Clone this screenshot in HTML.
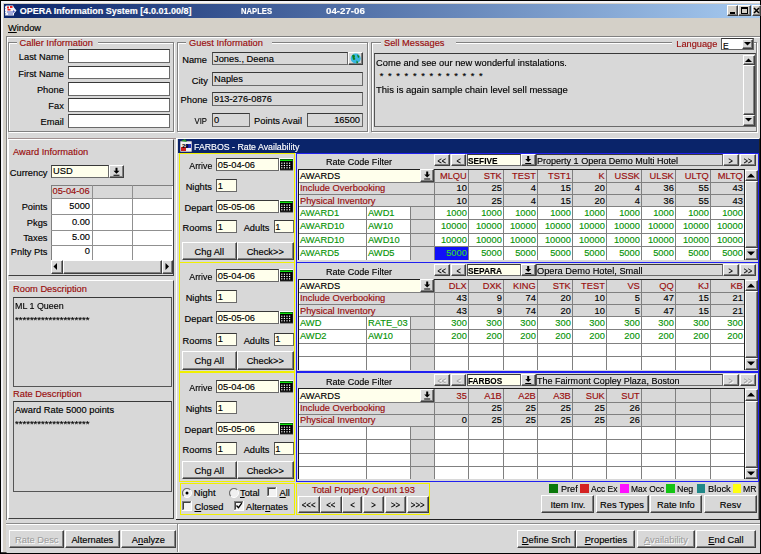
<!DOCTYPE html>
<html><head><meta charset="utf-8"><style>
html,body{margin:0;padding:0;}
body{width:761px;height:554px;overflow:hidden;position:relative;font-family:"Liberation Sans",sans-serif;}
body>div,body>svg{position:absolute;}
.t{white-space:pre;line-height:1.117;-webkit-text-stroke:0.15px currentColor;}
</style></head><body>
<div style="left:0px;top:0px;width:761px;height:554px;background:#D4D0C8;"></div>
<div style="left:0px;top:0px;width:761px;height:1px;background:#000;"></div>
<div style="left:0px;top:0px;width:1px;height:554px;background:#000;"></div>
<div style="left:1px;top:1px;width:759px;height:2px;background:#F4F4F8;"></div>
<div style="left:1px;top:1px;width:2px;height:552px;background:#F4F4F8;"></div>
<div style="left:760px;top:0px;width:1px;height:554px;background:#000;"></div>
<div style="left:0px;top:553px;width:761px;height:1px;background:#000;"></div>
<div style="left:1px;top:552px;width:759px;height:1px;background:#404040;"></div>
<div style="left:4px;top:4px;width:756px;height:14px;background:linear-gradient(90deg,#0A246A 0%,#A6CAF0 100%);"></div>
<svg style="left:5px;top:5px" width="12" height="11"><path d="M1 0.5h7l1 2l2.5 3l-2.5 3v2h-9l0.5 -2l-1 -1l1 -1l-1 -1.5l1 -1.5l-1 -1z" fill="#F4F4FA"/><path d="M2 1.5h2v2h-2zM5 1h2.5v2h-2.5zM2.5 4h3v1.5h-3z" fill="#F02020"/><path d="M2 6.5h6v1h-6zM3 8.5h5v1h-5zM8 5l2 1.5l-2 1.5z" fill="#5060C0"/></svg>
<div class="t" style="left:19.7px;top:6.16px;font-size:9px;color:#fff;font-weight:bold;transform:scaleX(1.000);transform-origin:left;">OPERA Information System [4.0.01.00/8]</div>
<div class="t" style="left:241px;top:6.16px;font-size:9px;color:#fff;font-weight:bold;transform:scaleX(0.849);transform-origin:left;">NAPLES</div>
<div class="t" style="left:326px;top:6.16px;font-size:9px;color:#fff;font-weight:bold;transform:scaleX(1.077);transform-origin:left;">04-27-06</div>
<div style="left:727px;top:5px;width:11px;height:11px;background:#D4D0C8;box-sizing:border-box;border:1px solid;border-color:#fff #404040 #404040 #fff;box-shadow:inset -1px -1px #808080;"></div>
<div style="left:730px;top:12px;width:5px;height:2px;background:#000;"></div>
<div style="left:738px;top:5px;width:13px;height:11px;background:#D4D0C8;box-sizing:border-box;border:1px solid;border-color:#fff #404040 #404040 #fff;box-shadow:inset -1px -1px #808080;"></div>
<div style="left:741px;top:7px;width:7px;height:7px;box-sizing:border-box;border:1px solid #000;border-top-width:2px;"></div>
<div style="left:752px;top:5px;width:9px;height:11px;background:#D4D0C8;box-sizing:border-box;border:1px solid;border-color:#fff #404040 #404040 #fff;box-shadow:inset -1px -1px #808080;"></div>
<svg style="left:753px;top:6px" width="8" height="9"><path d="M1 2l5 5M6 2l-5 5" stroke="#000" stroke-width="1.5"/></svg>
<div class="t" style="left:8px;top:23.28px;font-size:9.3px;color:#000;font-weight:normal;"><u>W</u>indow</div>
<div style="left:6px;top:36px;width:754px;height:517px;background:#D8D8D8;box-sizing:border-box;border-top:1px solid #808080;border-left:1px solid #808080;"></div>
<div style="left:7px;top:37px;width:753px;height:1px;background:#fff;"></div>
<div style="left:7px;top:37px;width:1px;height:515px;background:#fff;"></div>
<div style="left:8px;top:138px;width:168px;height:0.8px;background:#A09090;"></div>
<div style="left:8px;top:42px;width:166px;height:89.8px;box-sizing:border-box;border:1px solid #808080;"></div>
<div style="left:9px;top:43px;width:164px;height:87.8px;box-sizing:border-box;border:1px solid #fff;border-right:none;border-bottom:none;"></div>
<div style="left:9px;top:131.8px;width:166px;height:1px;background:#fff;"></div>
<div style="left:174px;top:43px;width:1px;height:89.8px;background:#fff;"></div>
<div style="left:16.5px;top:41px;width:81px;height:4px;background:#D8D8D8;"></div>
<div class="t" style="left:19.5px;top:38.28px;font-size:9.3px;color:#980C0C;font-weight:normal;">Caller Information</div>
<div style="left:177px;top:42px;width:191px;height:89.8px;box-sizing:border-box;border:1px solid #808080;"></div>
<div style="left:178px;top:43px;width:189px;height:87.8px;box-sizing:border-box;border:1px solid #fff;border-right:none;border-bottom:none;"></div>
<div style="left:178px;top:131.8px;width:191px;height:1px;background:#fff;"></div>
<div style="left:368px;top:43px;width:1px;height:89.8px;background:#fff;"></div>
<div style="left:186px;top:41px;width:86px;height:4px;background:#D8D8D8;"></div>
<div class="t" style="left:189px;top:38.28px;font-size:9.3px;color:#980C0C;font-weight:normal;">Guest Information</div>
<div style="left:371px;top:42px;width:386px;height:89.8px;box-sizing:border-box;border:1px solid #808080;"></div>
<div style="left:372px;top:43px;width:384px;height:87.8px;box-sizing:border-box;border:1px solid #fff;border-right:none;border-bottom:none;"></div>
<div style="left:372px;top:131.8px;width:386px;height:1px;background:#fff;"></div>
<div style="left:757px;top:43px;width:1px;height:89.8px;background:#fff;"></div>
<div style="left:381px;top:41px;width:75px;height:4px;background:#D8D8D8;"></div>
<div class="t" style="left:384px;top:38.28px;font-size:9.3px;color:#980C0C;font-weight:normal;">Sell Messages</div>
<div class="t" style="right:697.2px;top:52.18px;font-size:9.3px;color:#000;font-weight:normal;text-align:right;">Last Name</div>
<div style="left:68px;top:49px;width:102px;height:13.5px;background:#fff;box-sizing:border-box;border:1px solid #6a6a6a;border-top-color:#383838;border-left-color:#555;"></div>
<div class="t" style="right:697.2px;top:68.68px;font-size:9.3px;color:#000;font-weight:normal;text-align:right;">First Name</div>
<div style="left:68px;top:65.5px;width:102px;height:13.5px;background:#fff;box-sizing:border-box;border:1px solid #6a6a6a;border-top-color:#383838;border-left-color:#555;"></div>
<div class="t" style="right:697.2px;top:85.18px;font-size:9.3px;color:#000;font-weight:normal;text-align:right;">Phone</div>
<div style="left:68px;top:82px;width:102px;height:13.5px;background:#fff;box-sizing:border-box;border:1px solid #6a6a6a;border-top-color:#383838;border-left-color:#555;"></div>
<div class="t" style="right:697.2px;top:101.18px;font-size:9.3px;color:#000;font-weight:normal;text-align:right;">Fax</div>
<div style="left:68px;top:98px;width:102px;height:13.5px;background:#fff;box-sizing:border-box;border:1px solid #6a6a6a;border-top-color:#383838;border-left-color:#555;"></div>
<div class="t" style="right:697.2px;top:117.18px;font-size:9.3px;color:#000;font-weight:normal;text-align:right;">Email</div>
<div style="left:68px;top:114px;width:102px;height:13.5px;background:#fff;box-sizing:border-box;border:1px solid #6a6a6a;border-top-color:#383838;border-left-color:#555;"></div>
<div style="left:212px;top:52.2px;width:136px;height:13.3px;background:#D8D8D8;box-sizing:border-box;border:1px solid #6a6a6a;border-top-color:#383838;border-left-color:#555;"></div>
<div class="t" style="left:214px;top:53.68px;font-size:9.3px;color:#000;font-weight:normal;">Jones., Deena</div>
<div style="left:348px;top:52px;width:15px;height:13px;background:#D8D8D8;box-sizing:border-box;border:1px solid;border-color:#fff #404040 #404040 #fff;box-shadow:inset -1px -1px #808080;"></div>
<svg style="left:349px;top:52px" width="14" height="13"><circle cx="6.7" cy="6.5" r="5" fill="#38B8E0"/><path d="M3 3.5q2 -1.5 3 0.5q-1 2 0.5 3q-1.5 1.5 -2.5 0.5z M8 2.5q2 0.5 2.5 2.5l-1.5 1z M7.5 8.5q1.5 0 1.5 2.5l-1.5 0.5z" fill="#10801A"/></svg>
<div style="left:212px;top:72.4px;width:151px;height:13.3px;background:#D8D8D8;box-sizing:border-box;border:1px solid #6a6a6a;border-top-color:#383838;border-left-color:#555;"></div>
<div class="t" style="left:214px;top:73.88px;font-size:9.3px;color:#000;font-weight:normal;">Naples</div>
<div style="left:212px;top:92.4px;width:151px;height:13.3px;background:#D8D8D8;box-sizing:border-box;border:1px solid #6a6a6a;border-top-color:#383838;border-left-color:#555;"></div>
<div class="t" style="left:214px;top:93.88px;font-size:9.3px;color:#000;font-weight:normal;">913-276-0876</div>
<div style="left:212px;top:113.3px;width:38px;height:13.3px;background:#D8D8D8;box-sizing:border-box;border:1px solid #6a6a6a;border-top-color:#383838;border-left-color:#555;"></div>
<div class="t" style="left:214px;top:114.78px;font-size:9.3px;color:#000;font-weight:normal;">0</div>
<div style="left:306.5px;top:113.3px;width:56.5px;height:13.3px;background:#D8D8D8;box-sizing:border-box;border:1px solid #6a6a6a;border-top-color:#383838;border-left-color:#555;"></div>
<div class="t" style="right:401.0px;top:114.78px;font-size:9.3px;color:#000;font-weight:normal;text-align:right;">16500</div>
<div class="t" style="right:554px;top:55.18px;font-size:9.3px;color:#000;font-weight:normal;text-align:right;">Name</div>
<div class="t" style="right:553.2px;top:75.78px;font-size:9.3px;color:#000;font-weight:normal;text-align:right;">City</div>
<div class="t" style="right:553.5px;top:95.48px;font-size:9.3px;color:#000;font-weight:normal;text-align:right;">Phone</div>
<div class="t" style="right:554.4px;top:116.08px;font-size:9.3px;color:#000;font-weight:normal;text-align:right;transform:scaleX(0.827);transform-origin:right;">VIP</div>
<div class="t" style="right:459px;top:116.08px;font-size:9.3px;color:#000;font-weight:normal;text-align:right;">Points Avail</div>
<div style="left:672px;top:40px;width:49px;height:4px;background:#D8D8D8;"></div>
<div class="t" style="right:43.799999999999955px;top:38.98px;font-size:9.3px;color:#980C0C;font-weight:normal;text-align:right;transform:scaleX(0.991);transform-origin:right;">Language</div>
<div style="left:721px;top:38px;width:33px;height:11.7px;background:#fff;box-sizing:border-box;border:1px solid #6a6a6a;border-top-color:#383838;border-left-color:#555;"></div>
<div class="t" style="left:723px;top:41.91px;font-size:8.5px;color:#000;font-weight:normal;">E</div>
<div style="left:742.3px;top:38.5px;width:11px;height:10.8px;background:#D8D8D8;box-sizing:border-box;border:1px solid;border-color:#fff #404040 #404040 #fff;box-shadow:inset -1px -1px #808080;"></div>
<svg style="left:744.3px;top:42px" width="7" height="4"><path d="M0 0h7l-3.5 3.5z" fill="#000"/></svg>
<div style="left:374px;top:53px;width:382px;height:74px;background:#D8D8D8;box-sizing:border-box;border:1px solid #6a6a6a;border-top-color:#383838;border-left-color:#555;"></div>
<div class="t" style="left:375.7px;top:58.28px;font-size:9.3px;color:#000;font-weight:normal;transform:scaleX(1.001);transform-origin:left;">Come and see our new wonderful instalations.</div>
<div class="t" style="left:379.8px;top:71.28px;font-size:9.3px;color:#000;font-weight:normal;">*</div>
<div class="t" style="left:388.07px;top:71.28px;font-size:9.3px;color:#000;font-weight:normal;">*</div>
<div class="t" style="left:396.34000000000003px;top:71.28px;font-size:9.3px;color:#000;font-weight:normal;">*</div>
<div class="t" style="left:404.61px;top:71.28px;font-size:9.3px;color:#000;font-weight:normal;">*</div>
<div class="t" style="left:412.88px;top:71.28px;font-size:9.3px;color:#000;font-weight:normal;">*</div>
<div class="t" style="left:421.15000000000003px;top:71.28px;font-size:9.3px;color:#000;font-weight:normal;">*</div>
<div class="t" style="left:429.42px;top:71.28px;font-size:9.3px;color:#000;font-weight:normal;">*</div>
<div class="t" style="left:437.69px;top:71.28px;font-size:9.3px;color:#000;font-weight:normal;">*</div>
<div class="t" style="left:445.96px;top:71.28px;font-size:9.3px;color:#000;font-weight:normal;">*</div>
<div class="t" style="left:454.23px;top:71.28px;font-size:9.3px;color:#000;font-weight:normal;">*</div>
<div class="t" style="left:462.5px;top:71.28px;font-size:9.3px;color:#000;font-weight:normal;">*</div>
<div class="t" style="left:470.77000000000004px;top:71.28px;font-size:9.3px;color:#000;font-weight:normal;">*</div>
<div class="t" style="left:479.04px;top:71.28px;font-size:9.3px;color:#000;font-weight:normal;">*</div>
<div class="t" style="left:375.7px;top:85.28px;font-size:9.3px;color:#000;font-weight:normal;transform:scaleX(1.020);transform-origin:left;">This is again sample chain level sell message</div>
<div style="left:743px;top:55px;width:12px;height:71px;background:#D8D8D8;"></div>
<div style="left:743px;top:55px;width:12px;height:10px;background:#D8D8D8;box-sizing:border-box;border:1px solid;border-color:#fff #404040 #404040 #fff;box-shadow:inset -1px -1px #808080;"></div>
<svg style="left:745px;top:58px" width="8" height="4"><path d="M0 4h7l-3.5 -3.5z" fill="#000"/></svg>
<div style="left:743px;top:65px;width:12px;height:50px;background:#D8D8D8;box-sizing:border-box;border:1px solid;border-color:#fff #404040 #404040 #fff;box-shadow:inset -1px -1px #808080;"></div>
<div style="left:743px;top:115px;width:12px;height:11px;background:#D8D8D8;box-sizing:border-box;border:1px solid;border-color:#fff #404040 #404040 #fff;box-shadow:inset -1px -1px #808080;"></div>
<svg style="left:745px;top:118px" width="8" height="5"><path d="M0 0h7l-3.5 3.5z" fill="#000"/></svg>
<div style="left:8.2px;top:139px;width:166px;height:137px;background:#D8D8D8;box-sizing:border-box;border:1px solid;border-color:#fff #404040 #404040 #fff;"></div>
<div class="t" style="left:13px;top:147.28px;font-size:9.3px;color:#980C0C;font-weight:normal;">Award Information</div>
<div class="t" style="right:713.5px;top:167.68px;font-size:9.3px;color:#000;font-weight:normal;text-align:right;">Currency</div>
<div style="left:51px;top:164.5px;width:58px;height:13.5px;background:#FFFFEC;box-sizing:border-box;border:1px solid #6a6a6a;border-top-color:#383838;border-left-color:#555;"></div>
<div class="t" style="left:53px;top:166.28px;font-size:9.3px;color:#000;font-weight:normal;">USD</div>
<div style="left:109px;top:164.5px;width:15px;height:13.5px;background:#D8D8D8;box-sizing:border-box;border:1px solid;border-color:#fff #404040 #404040 #fff;box-shadow:inset -1px -1px #808080;"></div>
<svg style="left:109px;top:164.5px" width="15" height="13.5"><path d="M4.5 5.8h6l-3 3z M6.5 2.8h2v3h-2z M4.5 9.8h6v1h-6z" fill="#000"/></svg>
<div style="left:50.5px;top:184.5px;width:122px;height:75.5px;background:#fff;box-sizing:border-box;border-top:1px solid #808080;border-left:1px solid #808080;"></div>
<div style="left:51.5px;top:185.5px;width:120.5px;height:12.5px;background:#D8D8D8;"></div>
<div style="left:51px;top:198px;width:121px;height:1px;background:#909090;"></div>
<div style="left:51px;top:214.3px;width:121px;height:1px;background:#909090;"></div>
<div style="left:51px;top:230.4px;width:121px;height:1px;background:#909090;"></div>
<div style="left:51px;top:244.6px;width:121px;height:1px;background:#909090;"></div>
<div style="left:91.5px;top:185px;width:1px;height:75px;background:#909090;"></div>
<div style="left:132px;top:185px;width:1px;height:75px;background:#909090;"></div>
<div class="t" style="left:52.5px;top:185.88px;font-size:9.3px;color:#980C0C;font-weight:normal;">05-04-06</div>
<div class="t" style="right:713.5px;top:202.48px;font-size:9.3px;color:#000;font-weight:normal;text-align:right;">Points</div>
<div class="t" style="right:671px;top:201.48px;font-size:9.3px;color:#000;font-weight:normal;text-align:right;">5000</div>
<div class="t" style="right:713.5px;top:217.88px;font-size:9.3px;color:#000;font-weight:normal;text-align:right;">Pkgs</div>
<div class="t" style="right:671px;top:216.88px;font-size:9.3px;color:#000;font-weight:normal;text-align:right;">0.00</div>
<div class="t" style="right:713.5px;top:233.08px;font-size:9.3px;color:#000;font-weight:normal;text-align:right;">Taxes</div>
<div class="t" style="right:671px;top:232.08px;font-size:9.3px;color:#000;font-weight:normal;text-align:right;">5.00</div>
<div class="t" style="right:713.5px;top:247.48px;font-size:9.3px;color:#000;font-weight:normal;text-align:right;">Pnlty Pts</div>
<div class="t" style="right:671px;top:246.48px;font-size:9.3px;color:#000;font-weight:normal;text-align:right;">0</div>
<div style="left:50.5px;top:260px;width:122px;height:13.5px;background:#D8D8D8;"></div>
<div style="left:50.5px;top:260px;width:12px;height:13.5px;background:#D8D8D8;box-sizing:border-box;border:1px solid;border-color:#fff #404040 #404040 #fff;box-shadow:inset -1px -1px #808080;"></div>
<svg style="left:53px;top:263px" width="5" height="8"><path d="M4 0v7l-3.5 -3.5z" fill="#000"/></svg>
<div style="left:62.5px;top:260px;width:99px;height:13.5px;background:#D8D8D8;box-sizing:border-box;border:1px solid;border-color:#fff #404040 #404040 #fff;box-shadow:inset -1px -1px #808080;"></div>
<div style="left:161.5px;top:260px;width:11px;height:13.5px;background:#D8D8D8;box-sizing:border-box;border:1px solid;border-color:#fff #404040 #404040 #fff;box-shadow:inset -1px -1px #808080;"></div>
<svg style="left:165px;top:263px" width="5" height="8"><path d="M0.5 0v7l3.5 -3.5z" fill="#000"/></svg>
<div style="left:8.2px;top:279.5px;width:166px;height:239px;background:#D8D8D8;box-sizing:border-box;border:1px solid;border-color:#fff #404040 #404040 #fff;"></div>
<div class="t" style="left:13px;top:283.78px;font-size:9.3px;color:#980C0C;font-weight:normal;">Room Description</div>
<div style="left:13px;top:296.5px;width:159px;height:90px;box-sizing:border-box;border:1px solid #555;border-top-color:#383838;"></div>
<div class="t" style="left:14.7px;top:300.88px;font-size:9.3px;color:#000;font-weight:normal;transform:scaleX(0.957);transform-origin:left;">ML 1 Queen</div>
<div class="t" style="left:14.7px;top:315.28px;font-size:9.3px;color:#000;font-weight:normal;transform:scaleX(1.029);transform-origin:left;">********************</div>
<div class="t" style="left:13px;top:388.98px;font-size:9.3px;color:#980C0C;font-weight:normal;">Rate Description</div>
<div style="left:13px;top:400.5px;width:159px;height:91px;box-sizing:border-box;border:1px solid #555;border-top-color:#383838;"></div>
<div class="t" style="left:15px;top:404.98px;font-size:9.3px;color:#000;font-weight:normal;">Award Rate 5000 points</div>
<div class="t" style="left:14.7px;top:419.28px;font-size:9.3px;color:#000;font-weight:normal;transform:scaleX(1.029);transform-origin:left;">********************</div>
<div style="left:176px;top:138px;width:584px;height:383px;background:#D8D8D8;box-sizing:border-box;border:1px solid;border-color:#fff #202020 #202020 #fff;box-shadow:inset -1px -1px #808080;"></div>
<div style="left:178px;top:139px;width:581px;height:14px;background:#0A246A;"></div>
<svg style="left:179px;top:139px" width="14" height="14"><rect x="1" y="2" width="12" height="11" fill="#f0f0f0" stroke="#1a1a5a" stroke-width="0.6"/><path d="M2 2l4 -2l2 3z" fill="#2a9a2a"/><rect x="2" y="8" width="5" height="4" fill="#d02020"/><rect x="7" y="5" width="5" height="4" fill="#2030b0"/><text x="3" y="9" font-size="6" font-family="Liberation Sans" font-weight="bold" fill="#000">29</text></svg>
<div class="t" style="left:193.5px;top:141.78px;font-size:9.3px;color:#fff;font-weight:normal;transform:scaleX(0.945);transform-origin:left;">FARBOS - Rate Availability</div>
<div style="left:179px;top:152.5px;width:116px;height:110.0px;box-sizing:border-box;border:1px solid #F0F000;"></div>
<div style="left:296px;top:152.5px;width:462px;height:110.0px;box-sizing:border-box;border:1px solid #2020F0;border-right:none;"></div>
<div style="left:757.5px;top:152.5px;width:1.5px;height:110.0px;background:#2020F0;"></div>
<div class="t" style="right:548.6px;top:161.18px;font-size:9.3px;color:#000;font-weight:normal;text-align:right;transform:scaleX(0.947);transform-origin:right;">Arrive</div>
<div style="left:216px;top:158.1px;width:63px;height:13px;background:#FFFFEC;box-sizing:border-box;border:1px solid #6a6a6a;border-top-color:#383838;border-left-color:#555;"></div>
<div class="t" style="left:217.8px;top:159.98px;font-size:9.3px;color:#000;font-weight:normal;">05-04-06</div>
<svg style="left:278.8px;top:158.0px" width="14.5" height="12.5"><rect x="0" y="0" width="14.5" height="12.5" fill="#fff"/><rect x="1" y="1" width="13.5" height="11.5" fill="#303030"/><rect x="1" y="1" width="12.5" height="10.5" fill="#000"/><rect x="1" y="1.5" width="12.5" height="1.5" fill="#10E010"/><rect x="2.2" y="4.6" width="1.2" height="1.2" fill="#fff"/><rect x="2.2" y="6.9" width="1.2" height="1.2" fill="#fff"/><rect x="2.2" y="9.2" width="1.2" height="1.2" fill="#fff"/><rect x="4.8" y="4.6" width="1.2" height="1.2" fill="#fff"/><rect x="4.8" y="6.9" width="1.2" height="1.2" fill="#fff"/><rect x="4.8" y="9.2" width="1.2" height="1.2" fill="#fff"/><rect x="7.4" y="4.6" width="1.2" height="1.2" fill="#fff"/><rect x="7.4" y="6.9" width="1.2" height="1.2" fill="#fff"/><rect x="7.4" y="9.2" width="1.2" height="1.2" fill="#fff"/><rect x="10.0" y="4.6" width="1.2" height="1.2" fill="#fff"/><rect x="10.0" y="6.9" width="1.2" height="1.2" fill="#fff"/><rect x="10.0" y="9.2" width="1.2" height="1.2" fill="#fff"/></svg>
<div class="t" style="right:549px;top:182.18px;font-size:9.3px;color:#000;font-weight:normal;text-align:right;">Nights</div>
<div style="left:216px;top:179.1px;width:20.6px;height:13px;background:#FFFFEC;box-sizing:border-box;border:1px solid #6a6a6a;border-top-color:#383838;border-left-color:#555;"></div>
<div class="t" style="left:217.8px;top:180.98px;font-size:9.3px;color:#000;font-weight:normal;">1</div>
<div class="t" style="right:548.5px;top:202.98px;font-size:9.3px;color:#000;font-weight:normal;text-align:right;">Depart</div>
<div style="left:216px;top:200.1px;width:63px;height:13px;background:#FFFFEC;box-sizing:border-box;border:1px solid #6a6a6a;border-top-color:#383838;border-left-color:#555;"></div>
<div class="t" style="left:217.8px;top:201.98px;font-size:9.3px;color:#000;font-weight:normal;">05-05-06</div>
<svg style="left:278.8px;top:200.0px" width="14.5" height="12.5"><rect x="0" y="0" width="14.5" height="12.5" fill="#fff"/><rect x="1" y="1" width="13.5" height="11.5" fill="#303030"/><rect x="1" y="1" width="12.5" height="10.5" fill="#000"/><rect x="1" y="1.5" width="12.5" height="1.5" fill="#10E010"/><rect x="2.2" y="4.6" width="1.2" height="1.2" fill="#fff"/><rect x="2.2" y="6.9" width="1.2" height="1.2" fill="#fff"/><rect x="2.2" y="9.2" width="1.2" height="1.2" fill="#fff"/><rect x="4.8" y="4.6" width="1.2" height="1.2" fill="#fff"/><rect x="4.8" y="6.9" width="1.2" height="1.2" fill="#fff"/><rect x="4.8" y="9.2" width="1.2" height="1.2" fill="#fff"/><rect x="7.4" y="4.6" width="1.2" height="1.2" fill="#fff"/><rect x="7.4" y="6.9" width="1.2" height="1.2" fill="#fff"/><rect x="7.4" y="9.2" width="1.2" height="1.2" fill="#fff"/><rect x="10.0" y="4.6" width="1.2" height="1.2" fill="#fff"/><rect x="10.0" y="6.9" width="1.2" height="1.2" fill="#fff"/><rect x="10.0" y="9.2" width="1.2" height="1.2" fill="#fff"/></svg>
<div class="t" style="right:549px;top:223.18px;font-size:9.3px;color:#000;font-weight:normal;text-align:right;">Rooms</div>
<div style="left:216px;top:220.1px;width:20.6px;height:13px;background:#FFFFEC;box-sizing:border-box;border:1px solid #6a6a6a;border-top-color:#383838;border-left-color:#555;"></div>
<div class="t" style="left:217.8px;top:221.98px;font-size:9.3px;color:#000;font-weight:normal;">1</div>
<div class="t" style="right:491.5px;top:223.18px;font-size:9.3px;color:#000;font-weight:normal;text-align:right;">Adults</div>
<div style="left:273.5px;top:220.1px;width:20px;height:13px;background:#FFFFEC;box-sizing:border-box;border:1px solid #6a6a6a;border-top-color:#383838;border-left-color:#555;"></div>
<div class="t" style="left:275.3px;top:221.98px;font-size:9.3px;color:#000;font-weight:normal;">1</div>
<div style="left:181.5px;top:242px;width:55.5px;height:18.2px;background:#D8D8D8;box-sizing:border-box;border:1px solid;border-color:#fff #404040 #404040 #fff;box-shadow:inset -1px -1px #808080;"></div>
<div class="t" style="left:181.5px;width:55.5px;top:246.78px;font-size:9.3px;color:#000;font-weight:normal;text-align:center;">Chg All</div>
<div style="left:237px;top:242px;width:56.5px;height:18.2px;background:#D8D8D8;box-sizing:border-box;border:1px solid;border-color:#fff #404040 #404040 #fff;box-shadow:inset -1px -1px #808080;"></div>
<div class="t" style="left:237px;width:56.5px;top:246.78px;font-size:9.3px;color:#000;font-weight:normal;text-align:center;">Check&gt;&gt;</div>
<div class="t" style="left:326px;top:156.78px;font-size:9.3px;color:#000;font-weight:normal;transform:scaleX(0.975);transform-origin:left;">Rate Code Filter</div>
<div style="left:434px;top:154.4px;width:15.5px;height:12px;background:#D8D8D8;box-sizing:border-box;border:1px solid;border-color:#fff #404040 #404040 #fff;box-shadow:inset -1px -1px #808080;"></div>
<div class="t" style="left:434px;width:15.5px;top:156.08px;font-size:9.3px;color:#000;font-weight:normal;text-align:center;transform:scaleX(0.764);transform-origin:center;">&lt;&lt;</div>
<div style="left:450.5px;top:154.4px;width:15.5px;height:12px;background:#D8D8D8;box-sizing:border-box;border:1px solid;border-color:#fff #404040 #404040 #fff;box-shadow:inset -1px -1px #808080;"></div>
<div class="t" style="left:450.5px;width:15.5px;top:156.08px;font-size:9.3px;color:#000;font-weight:normal;text-align:center;transform:scaleX(0.792);transform-origin:center;">&lt;</div>
<div style="left:467px;top:154.4px;width:54px;height:12px;background:#FFFFEC;box-sizing:border-box;border:1px solid #6a6a6a;border-top-color:#383838;border-left-color:#555;"></div>
<div class="t" style="left:467.8px;top:156.18px;font-size:9.3px;color:#000;font-weight:bold;transform:scaleX(0.892);transform-origin:left;">SEFIVE</div>
<div style="left:521px;top:154.4px;width:14.5px;height:12px;background:#D8D8D8;box-sizing:border-box;border:1px solid;border-color:#fff #404040 #404040 #fff;box-shadow:inset -1px -1px #808080;"></div>
<svg style="left:521px;top:154.4px" width="14.5" height="12"><path d="M4.2 5.0h6l-3 3z M6.2 2.0h2v3h-2z M4.2 9.0h6v1h-6z" fill="#000"/></svg>
<div style="left:535.5px;top:154.4px;width:187px;height:12px;background:#D8D8D8;box-sizing:border-box;border:1px solid #6a6a6a;border-top-color:#383838;border-left-color:#555;"></div>
<div class="t" style="left:537px;top:156.18px;font-size:9.3px;color:#000;font-weight:normal;transform:scaleX(0.971);transform-origin:left;">Property 1 Opera Demo Multi Hotel</div>
<div style="left:723px;top:154.4px;width:15.5px;height:12px;background:#D8D8D8;box-sizing:border-box;border:1px solid;border-color:#fff #404040 #404040 #fff;box-shadow:inset -1px -1px #808080;"></div>
<div class="t" style="left:723px;width:15.5px;top:156.08px;font-size:9.3px;color:#000;font-weight:normal;text-align:center;transform:scaleX(0.792);transform-origin:center;">&gt;</div>
<div style="left:740px;top:154.4px;width:16px;height:12px;background:#D8D8D8;box-sizing:border-box;border:1px solid;border-color:#fff #404040 #404040 #fff;box-shadow:inset -1px -1px #808080;"></div>
<div class="t" style="left:740px;width:16px;top:156.08px;font-size:9.3px;color:#000;font-weight:normal;text-align:center;transform:scaleX(0.764);transform-origin:center;">&gt;&gt;</div>
<div style="left:298px;top:168.6px;width:446.5px;height:91.00000000000003px;background:#fff;box-sizing:border-box;border-top:1px solid #202020;border-left:1.5px solid #101010;"></div>
<div style="left:299.5px;top:169.6px;width:120.5px;height:12.6px;background:#FFFFEC;"></div>
<div style="left:420px;top:169.1px;width:14.3px;height:13.1px;background:#D8D8D8;box-sizing:border-box;border:1px solid;border-color:#fff #404040 #404040 #fff;box-shadow:inset -1px -1px #808080;"></div>
<svg style="left:420px;top:169.1px" width="14.3" height="13.1"><path d="M4.2 5.5h6l-3 3z M6.2 2.5h2v3h-2z M4.2 9.6h6v1h-6z" fill="#000"/></svg>
<div style="left:434.3px;top:169.6px;width:310.2px;height:12.6px;background:#D8D8D8;"></div>
<div class="t" style="left:300px;top:171.18px;font-size:9.3px;color:#000;font-weight:normal;">AWARDS</div>
<div style="left:299.5px;top:182.2px;width:445px;height:24.1px;background:#D8D8D8;"></div>
<div style="left:410px;top:206.3px;width:24px;height:53.3px;background:#D8D8D8;"></div>
<div style="left:299px;top:182.2px;width:445.5px;height:1px;background:#808080;"></div>
<div style="left:299px;top:194.2px;width:445.5px;height:1px;background:#808080;"></div>
<div style="left:299px;top:206.3px;width:445.5px;height:1px;background:#808080;"></div>
<div style="left:299px;top:219.3px;width:445.5px;height:1px;background:#808080;"></div>
<div style="left:299px;top:232.7px;width:445.5px;height:1px;background:#808080;"></div>
<div style="left:299px;top:246.0px;width:445.5px;height:1px;background:#808080;"></div>
<div style="left:434px;top:169.6px;width:1px;height:90.00000000000003px;background:#808080;"></div>
<div style="left:468px;top:169.6px;width:1px;height:90.00000000000003px;background:#808080;"></div>
<div style="left:503px;top:169.6px;width:1px;height:90.00000000000003px;background:#808080;"></div>
<div style="left:537px;top:169.6px;width:1px;height:90.00000000000003px;background:#808080;"></div>
<div style="left:572px;top:169.6px;width:1px;height:90.00000000000003px;background:#808080;"></div>
<div style="left:606px;top:169.6px;width:1px;height:90.00000000000003px;background:#808080;"></div>
<div style="left:641px;top:169.6px;width:1px;height:90.00000000000003px;background:#808080;"></div>
<div style="left:675px;top:169.6px;width:1px;height:90.00000000000003px;background:#808080;"></div>
<div style="left:710px;top:169.6px;width:1px;height:90.00000000000003px;background:#808080;"></div>
<div style="left:366px;top:206.3px;width:1px;height:53.3px;background:#808080;"></div>
<div style="left:410px;top:206.3px;width:1px;height:53.3px;background:#808080;"></div>
<div style="left:744px;top:168.6px;width:1px;height:91.00000000000003px;background:#202020;"></div>
<div class="t" style="right:294.2px;top:171.18px;font-size:9.3px;color:#980C0C;font-weight:normal;text-align:right;">MLQU</div>
<div class="t" style="right:259.2px;top:171.18px;font-size:9.3px;color:#980C0C;font-weight:normal;text-align:right;">STK</div>
<div class="t" style="right:225.20000000000005px;top:171.18px;font-size:9.3px;color:#980C0C;font-weight:normal;text-align:right;">TEST</div>
<div class="t" style="right:190.20000000000005px;top:171.18px;font-size:9.3px;color:#980C0C;font-weight:normal;text-align:right;">TST1</div>
<div class="t" style="right:156.20000000000005px;top:171.18px;font-size:9.3px;color:#980C0C;font-weight:normal;text-align:right;">K</div>
<div class="t" style="right:121.20000000000005px;top:171.18px;font-size:9.3px;color:#980C0C;font-weight:normal;text-align:right;">USSK</div>
<div class="t" style="right:87.20000000000005px;top:171.18px;font-size:9.3px;color:#980C0C;font-weight:normal;text-align:right;">ULSK</div>
<div class="t" style="right:52.200000000000045px;top:171.18px;font-size:9.3px;color:#980C0C;font-weight:normal;text-align:right;">ULTQ</div>
<div class="t" style="right:18.200000000000045px;top:171.18px;font-size:9.3px;color:#980C0C;font-weight:normal;text-align:right;">MLTQ</div>
<div class="t" style="left:300px;top:183.48px;font-size:9.3px;color:#980C0C;font-weight:normal;">Include Overbooking</div>
<div class="t" style="left:300px;top:195.58px;font-size:9.3px;color:#980C0C;font-weight:normal;">Physical Inventory</div>
<div class="t" style="right:294.2px;top:183.48px;font-size:9.3px;color:#000;font-weight:normal;text-align:right;">10</div>
<div class="t" style="right:259.2px;top:183.48px;font-size:9.3px;color:#000;font-weight:normal;text-align:right;">25</div>
<div class="t" style="right:225.20000000000005px;top:183.48px;font-size:9.3px;color:#000;font-weight:normal;text-align:right;">4</div>
<div class="t" style="right:190.20000000000005px;top:183.48px;font-size:9.3px;color:#000;font-weight:normal;text-align:right;">15</div>
<div class="t" style="right:156.20000000000005px;top:183.48px;font-size:9.3px;color:#000;font-weight:normal;text-align:right;">20</div>
<div class="t" style="right:121.20000000000005px;top:183.48px;font-size:9.3px;color:#000;font-weight:normal;text-align:right;">4</div>
<div class="t" style="right:87.20000000000005px;top:183.48px;font-size:9.3px;color:#000;font-weight:normal;text-align:right;">36</div>
<div class="t" style="right:52.200000000000045px;top:183.48px;font-size:9.3px;color:#000;font-weight:normal;text-align:right;">55</div>
<div class="t" style="right:18.200000000000045px;top:183.48px;font-size:9.3px;color:#000;font-weight:normal;text-align:right;">43</div>
<div class="t" style="right:294.2px;top:195.58px;font-size:9.3px;color:#000;font-weight:normal;text-align:right;">10</div>
<div class="t" style="right:259.2px;top:195.58px;font-size:9.3px;color:#000;font-weight:normal;text-align:right;">25</div>
<div class="t" style="right:225.20000000000005px;top:195.58px;font-size:9.3px;color:#000;font-weight:normal;text-align:right;">4</div>
<div class="t" style="right:190.20000000000005px;top:195.58px;font-size:9.3px;color:#000;font-weight:normal;text-align:right;">15</div>
<div class="t" style="right:156.20000000000005px;top:195.58px;font-size:9.3px;color:#000;font-weight:normal;text-align:right;">20</div>
<div class="t" style="right:121.20000000000005px;top:195.58px;font-size:9.3px;color:#000;font-weight:normal;text-align:right;">4</div>
<div class="t" style="right:87.20000000000005px;top:195.58px;font-size:9.3px;color:#000;font-weight:normal;text-align:right;">36</div>
<div class="t" style="right:52.200000000000045px;top:195.58px;font-size:9.3px;color:#000;font-weight:normal;text-align:right;">55</div>
<div class="t" style="right:18.200000000000045px;top:195.58px;font-size:9.3px;color:#000;font-weight:normal;text-align:right;">43</div>
<div class="t" style="left:300px;top:207.98px;font-size:9.3px;color:#089408;font-weight:normal;">AWARD1</div>
<div class="t" style="left:368px;top:207.98px;font-size:9.3px;color:#089408;font-weight:normal;">AWD1</div>
<div class="t" style="right:294.2px;top:207.98px;font-size:9.3px;color:#089408;font-weight:normal;text-align:right;">1000</div>
<div class="t" style="right:259.2px;top:207.98px;font-size:9.3px;color:#089408;font-weight:normal;text-align:right;">1000</div>
<div class="t" style="right:225.20000000000005px;top:207.98px;font-size:9.3px;color:#089408;font-weight:normal;text-align:right;">1000</div>
<div class="t" style="right:190.20000000000005px;top:207.98px;font-size:9.3px;color:#089408;font-weight:normal;text-align:right;">1000</div>
<div class="t" style="right:156.20000000000005px;top:207.98px;font-size:9.3px;color:#089408;font-weight:normal;text-align:right;">1000</div>
<div class="t" style="right:121.20000000000005px;top:207.98px;font-size:9.3px;color:#089408;font-weight:normal;text-align:right;">1000</div>
<div class="t" style="right:87.20000000000005px;top:207.98px;font-size:9.3px;color:#089408;font-weight:normal;text-align:right;">1000</div>
<div class="t" style="right:52.200000000000045px;top:207.98px;font-size:9.3px;color:#089408;font-weight:normal;text-align:right;">1000</div>
<div class="t" style="right:18.200000000000045px;top:207.98px;font-size:9.3px;color:#089408;font-weight:normal;text-align:right;">1000</div>
<div class="t" style="left:300px;top:221.38px;font-size:9.3px;color:#089408;font-weight:normal;">AWARD10</div>
<div class="t" style="left:368px;top:221.38px;font-size:9.3px;color:#089408;font-weight:normal;">AW10</div>
<div class="t" style="right:294.2px;top:221.38px;font-size:9.3px;color:#089408;font-weight:normal;text-align:right;">10000</div>
<div class="t" style="right:259.2px;top:221.38px;font-size:9.3px;color:#089408;font-weight:normal;text-align:right;">10000</div>
<div class="t" style="right:225.20000000000005px;top:221.38px;font-size:9.3px;color:#089408;font-weight:normal;text-align:right;">10000</div>
<div class="t" style="right:190.20000000000005px;top:221.38px;font-size:9.3px;color:#089408;font-weight:normal;text-align:right;">10000</div>
<div class="t" style="right:156.20000000000005px;top:221.38px;font-size:9.3px;color:#089408;font-weight:normal;text-align:right;">10000</div>
<div class="t" style="right:121.20000000000005px;top:221.38px;font-size:9.3px;color:#089408;font-weight:normal;text-align:right;">10000</div>
<div class="t" style="right:87.20000000000005px;top:221.38px;font-size:9.3px;color:#089408;font-weight:normal;text-align:right;">10000</div>
<div class="t" style="right:52.200000000000045px;top:221.38px;font-size:9.3px;color:#089408;font-weight:normal;text-align:right;">10000</div>
<div class="t" style="right:18.200000000000045px;top:221.38px;font-size:9.3px;color:#089408;font-weight:normal;text-align:right;">10000</div>
<div class="t" style="left:300px;top:234.68px;font-size:9.3px;color:#089408;font-weight:normal;">AWARD10</div>
<div class="t" style="left:368px;top:234.68px;font-size:9.3px;color:#089408;font-weight:normal;">AWD10</div>
<div class="t" style="right:294.2px;top:234.68px;font-size:9.3px;color:#089408;font-weight:normal;text-align:right;">10000</div>
<div class="t" style="right:259.2px;top:234.68px;font-size:9.3px;color:#089408;font-weight:normal;text-align:right;">10000</div>
<div class="t" style="right:225.20000000000005px;top:234.68px;font-size:9.3px;color:#089408;font-weight:normal;text-align:right;">10000</div>
<div class="t" style="right:190.20000000000005px;top:234.68px;font-size:9.3px;color:#089408;font-weight:normal;text-align:right;">10000</div>
<div class="t" style="right:156.20000000000005px;top:234.68px;font-size:9.3px;color:#089408;font-weight:normal;text-align:right;">10000</div>
<div class="t" style="right:121.20000000000005px;top:234.68px;font-size:9.3px;color:#089408;font-weight:normal;text-align:right;">10000</div>
<div class="t" style="right:87.20000000000005px;top:234.68px;font-size:9.3px;color:#089408;font-weight:normal;text-align:right;">10000</div>
<div class="t" style="right:52.200000000000045px;top:234.68px;font-size:9.3px;color:#089408;font-weight:normal;text-align:right;">10000</div>
<div class="t" style="right:18.200000000000045px;top:234.68px;font-size:9.3px;color:#089408;font-weight:normal;text-align:right;">10000</div>
<div class="t" style="left:300px;top:248.28px;font-size:9.3px;color:#089408;font-weight:normal;">AWARD5</div>
<div class="t" style="left:368px;top:248.28px;font-size:9.3px;color:#089408;font-weight:normal;">AWD5</div>
<div style="left:435px;top:247.0px;width:33px;height:12.599999999999994px;background:#1010F8;"></div>
<div class="t" style="right:294.2px;top:248.28px;font-size:9.3px;color:#30D830;font-weight:normal;text-align:right;">5000</div>
<div class="t" style="right:259.2px;top:248.28px;font-size:9.3px;color:#089408;font-weight:normal;text-align:right;">5000</div>
<div class="t" style="right:225.20000000000005px;top:248.28px;font-size:9.3px;color:#089408;font-weight:normal;text-align:right;">5000</div>
<div class="t" style="right:190.20000000000005px;top:248.28px;font-size:9.3px;color:#089408;font-weight:normal;text-align:right;">5000</div>
<div class="t" style="right:156.20000000000005px;top:248.28px;font-size:9.3px;color:#089408;font-weight:normal;text-align:right;">5000</div>
<div class="t" style="right:121.20000000000005px;top:248.28px;font-size:9.3px;color:#089408;font-weight:normal;text-align:right;">5000</div>
<div class="t" style="right:87.20000000000005px;top:248.28px;font-size:9.3px;color:#089408;font-weight:normal;text-align:right;">5000</div>
<div class="t" style="right:52.200000000000045px;top:248.28px;font-size:9.3px;color:#089408;font-weight:normal;text-align:right;">5000</div>
<div class="t" style="right:18.200000000000045px;top:248.28px;font-size:9.3px;color:#089408;font-weight:normal;text-align:right;">5000</div>
<div style="left:745px;top:168.6px;width:12.5px;height:91.00000000000003px;background:#D8D8D8;"></div>
<div style="left:745px;top:169.6px;width:12.5px;height:11.5px;background:#D8D8D8;box-sizing:border-box;border:1px solid;border-color:#fff #404040 #404040 #fff;box-shadow:inset -1px -1px #808080;"></div>
<svg style="left:747px;top:172.6px" width="8" height="5"><path d="M0 4.5h8l-4 -4z" fill="#000"/></svg>
<div style="left:745px;top:181.1px;width:12.5px;height:67.00000000000003px;background:#D8D8D8;box-sizing:border-box;border:1px solid;border-color:#fff #404040 #404040 #fff;box-shadow:inset -1px -1px #808080;"></div>
<div style="left:745px;top:248.10000000000002px;width:12.5px;height:11.5px;background:#D8D8D8;box-sizing:border-box;border:1px solid;border-color:#fff #404040 #404040 #fff;box-shadow:inset -1px -1px #808080;"></div>
<svg style="left:747px;top:251.1px" width="8" height="5"><path d="M0 0.5h8l-4 4z" fill="#000"/></svg>
<div style="left:179px;top:262px;width:116px;height:110px;box-sizing:border-box;border:1px solid #F0F000;"></div>
<div style="left:296px;top:262px;width:462px;height:110px;box-sizing:border-box;border:1px solid #2020F0;border-right:none;"></div>
<div style="left:757.5px;top:262px;width:1.5px;height:110px;background:#2020F0;"></div>
<div class="t" style="right:548.6px;top:272.48px;font-size:9.3px;color:#000;font-weight:normal;text-align:right;transform:scaleX(0.947);transform-origin:right;">Arrive</div>
<div style="left:216px;top:269.4px;width:63px;height:13px;background:#FFFFEC;box-sizing:border-box;border:1px solid #6a6a6a;border-top-color:#383838;border-left-color:#555;"></div>
<div class="t" style="left:217.8px;top:271.28px;font-size:9.3px;color:#000;font-weight:normal;">05-04-06</div>
<svg style="left:278.8px;top:269.29999999999995px" width="14.5" height="12.5"><rect x="0" y="0" width="14.5" height="12.5" fill="#fff"/><rect x="1" y="1" width="13.5" height="11.5" fill="#303030"/><rect x="1" y="1" width="12.5" height="10.5" fill="#000"/><rect x="1" y="1.5" width="12.5" height="1.5" fill="#10E010"/><rect x="2.2" y="4.6" width="1.2" height="1.2" fill="#fff"/><rect x="2.2" y="6.9" width="1.2" height="1.2" fill="#fff"/><rect x="2.2" y="9.2" width="1.2" height="1.2" fill="#fff"/><rect x="4.8" y="4.6" width="1.2" height="1.2" fill="#fff"/><rect x="4.8" y="6.9" width="1.2" height="1.2" fill="#fff"/><rect x="4.8" y="9.2" width="1.2" height="1.2" fill="#fff"/><rect x="7.4" y="4.6" width="1.2" height="1.2" fill="#fff"/><rect x="7.4" y="6.9" width="1.2" height="1.2" fill="#fff"/><rect x="7.4" y="9.2" width="1.2" height="1.2" fill="#fff"/><rect x="10.0" y="4.6" width="1.2" height="1.2" fill="#fff"/><rect x="10.0" y="6.9" width="1.2" height="1.2" fill="#fff"/><rect x="10.0" y="9.2" width="1.2" height="1.2" fill="#fff"/></svg>
<div class="t" style="right:549px;top:293.48px;font-size:9.3px;color:#000;font-weight:normal;text-align:right;">Nights</div>
<div style="left:216px;top:290.4px;width:20.6px;height:13px;background:#FFFFEC;box-sizing:border-box;border:1px solid #6a6a6a;border-top-color:#383838;border-left-color:#555;"></div>
<div class="t" style="left:217.8px;top:292.28px;font-size:9.3px;color:#000;font-weight:normal;">1</div>
<div class="t" style="right:548.5px;top:314.28px;font-size:9.3px;color:#000;font-weight:normal;text-align:right;">Depart</div>
<div style="left:216px;top:311.4px;width:63px;height:13px;background:#FFFFEC;box-sizing:border-box;border:1px solid #6a6a6a;border-top-color:#383838;border-left-color:#555;"></div>
<div class="t" style="left:217.8px;top:313.28px;font-size:9.3px;color:#000;font-weight:normal;">05-05-06</div>
<svg style="left:278.8px;top:311.29999999999995px" width="14.5" height="12.5"><rect x="0" y="0" width="14.5" height="12.5" fill="#fff"/><rect x="1" y="1" width="13.5" height="11.5" fill="#303030"/><rect x="1" y="1" width="12.5" height="10.5" fill="#000"/><rect x="1" y="1.5" width="12.5" height="1.5" fill="#10E010"/><rect x="2.2" y="4.6" width="1.2" height="1.2" fill="#fff"/><rect x="2.2" y="6.9" width="1.2" height="1.2" fill="#fff"/><rect x="2.2" y="9.2" width="1.2" height="1.2" fill="#fff"/><rect x="4.8" y="4.6" width="1.2" height="1.2" fill="#fff"/><rect x="4.8" y="6.9" width="1.2" height="1.2" fill="#fff"/><rect x="4.8" y="9.2" width="1.2" height="1.2" fill="#fff"/><rect x="7.4" y="4.6" width="1.2" height="1.2" fill="#fff"/><rect x="7.4" y="6.9" width="1.2" height="1.2" fill="#fff"/><rect x="7.4" y="9.2" width="1.2" height="1.2" fill="#fff"/><rect x="10.0" y="4.6" width="1.2" height="1.2" fill="#fff"/><rect x="10.0" y="6.9" width="1.2" height="1.2" fill="#fff"/><rect x="10.0" y="9.2" width="1.2" height="1.2" fill="#fff"/></svg>
<div class="t" style="right:549px;top:335.68px;font-size:9.3px;color:#000;font-weight:normal;text-align:right;">Rooms</div>
<div style="left:216px;top:332.59999999999997px;width:20.6px;height:13px;background:#FFFFEC;box-sizing:border-box;border:1px solid #6a6a6a;border-top-color:#383838;border-left-color:#555;"></div>
<div class="t" style="left:217.8px;top:334.48px;font-size:9.3px;color:#000;font-weight:normal;">1</div>
<div class="t" style="right:491.5px;top:335.68px;font-size:9.3px;color:#000;font-weight:normal;text-align:right;">Adults</div>
<div style="left:273.5px;top:332.59999999999997px;width:20px;height:13px;background:#FFFFEC;box-sizing:border-box;border:1px solid #6a6a6a;border-top-color:#383838;border-left-color:#555;"></div>
<div class="t" style="left:275.3px;top:334.48px;font-size:9.3px;color:#000;font-weight:normal;">1</div>
<div style="left:181.5px;top:351.4px;width:55.5px;height:18.2px;background:#D8D8D8;box-sizing:border-box;border:1px solid;border-color:#fff #404040 #404040 #fff;box-shadow:inset -1px -1px #808080;"></div>
<div class="t" style="left:181.5px;width:55.5px;top:356.18px;font-size:9.3px;color:#000;font-weight:normal;text-align:center;">Chg All</div>
<div style="left:237px;top:351.4px;width:56.5px;height:18.2px;background:#D8D8D8;box-sizing:border-box;border:1px solid;border-color:#fff #404040 #404040 #fff;box-shadow:inset -1px -1px #808080;"></div>
<div class="t" style="left:237px;width:56.5px;top:356.18px;font-size:9.3px;color:#000;font-weight:normal;text-align:center;">Check&gt;&gt;</div>
<div class="t" style="left:326px;top:266.78px;font-size:9.3px;color:#000;font-weight:normal;transform:scaleX(0.975);transform-origin:left;">Rate Code Filter</div>
<div style="left:434px;top:264.40000000000003px;width:15.5px;height:12px;background:#D8D8D8;box-sizing:border-box;border:1px solid;border-color:#fff #404040 #404040 #fff;box-shadow:inset -1px -1px #808080;"></div>
<div class="t" style="left:434px;width:15.5px;top:266.08px;font-size:9.3px;color:#000;font-weight:normal;text-align:center;transform:scaleX(0.764);transform-origin:center;">&lt;&lt;</div>
<div style="left:450.5px;top:264.40000000000003px;width:15.5px;height:12px;background:#D8D8D8;box-sizing:border-box;border:1px solid;border-color:#fff #404040 #404040 #fff;box-shadow:inset -1px -1px #808080;"></div>
<div class="t" style="left:450.5px;width:15.5px;top:266.08px;font-size:9.3px;color:#000;font-weight:normal;text-align:center;transform:scaleX(0.792);transform-origin:center;">&lt;</div>
<div style="left:467px;top:264.40000000000003px;width:54px;height:12px;background:#FFFFEC;box-sizing:border-box;border:1px solid #6a6a6a;border-top-color:#383838;border-left-color:#555;"></div>
<div class="t" style="left:467.8px;top:266.18px;font-size:9.3px;color:#000;font-weight:bold;transform:scaleX(0.895);transform-origin:left;">SEPARA</div>
<div style="left:521px;top:264.40000000000003px;width:14.5px;height:12px;background:#D8D8D8;box-sizing:border-box;border:1px solid;border-color:#fff #404040 #404040 #fff;box-shadow:inset -1px -1px #808080;"></div>
<svg style="left:521px;top:264.40000000000003px" width="14.5" height="12"><path d="M4.2 5.0h6l-3 3z M6.2 2.0h2v3h-2z M4.2 9.0h6v1h-6z" fill="#000"/></svg>
<div style="left:535.5px;top:264.40000000000003px;width:187px;height:12px;background:#D8D8D8;box-sizing:border-box;border:1px solid #6a6a6a;border-top-color:#383838;border-left-color:#555;"></div>
<div class="t" style="left:537px;top:266.18px;font-size:9.3px;color:#000;font-weight:normal;transform:scaleX(0.997);transform-origin:left;">Opera Demo Hotel, Small</div>
<div style="left:723px;top:264.40000000000003px;width:15.5px;height:12px;background:#D8D8D8;box-sizing:border-box;border:1px solid;border-color:#fff #404040 #404040 #fff;box-shadow:inset -1px -1px #808080;"></div>
<div class="t" style="left:723px;width:15.5px;top:266.08px;font-size:9.3px;color:#000;font-weight:normal;text-align:center;transform:scaleX(0.792);transform-origin:center;">&gt;</div>
<div style="left:740px;top:264.40000000000003px;width:16px;height:12px;background:#D8D8D8;box-sizing:border-box;border:1px solid;border-color:#fff #404040 #404040 #fff;box-shadow:inset -1px -1px #808080;"></div>
<div class="t" style="left:740px;width:16px;top:266.08px;font-size:9.3px;color:#000;font-weight:normal;text-align:center;transform:scaleX(0.764);transform-origin:center;">&gt;&gt;</div>
<div style="left:298px;top:278.6px;width:446.5px;height:91.0px;background:#fff;box-sizing:border-box;border-top:1px solid #202020;border-left:1.5px solid #101010;"></div>
<div style="left:299.5px;top:279.6px;width:120.5px;height:12.6px;background:#FFFFEC;"></div>
<div style="left:420px;top:279.1px;width:14.3px;height:13.1px;background:#D8D8D8;box-sizing:border-box;border:1px solid;border-color:#fff #404040 #404040 #fff;box-shadow:inset -1px -1px #808080;"></div>
<svg style="left:420px;top:279.1px" width="14.3" height="13.1"><path d="M4.2 5.5h6l-3 3z M6.2 2.5h2v3h-2z M4.2 9.6h6v1h-6z" fill="#000"/></svg>
<div style="left:434.3px;top:279.6px;width:310.2px;height:12.6px;background:#D8D8D8;"></div>
<div class="t" style="left:300px;top:281.18px;font-size:9.3px;color:#000;font-weight:normal;">AWARDS</div>
<div style="left:299.5px;top:292.20000000000005px;width:445px;height:24.1px;background:#D8D8D8;"></div>
<div style="left:410px;top:316.3px;width:24px;height:53.3px;background:#D8D8D8;"></div>
<div style="left:299px;top:292.20000000000005px;width:445.5px;height:1px;background:#808080;"></div>
<div style="left:299px;top:304.20000000000005px;width:445.5px;height:1px;background:#808080;"></div>
<div style="left:299px;top:316.3px;width:445.5px;height:1px;background:#808080;"></div>
<div style="left:299px;top:329.3px;width:445.5px;height:1px;background:#808080;"></div>
<div style="left:299px;top:342.70000000000005px;width:445.5px;height:1px;background:#808080;"></div>
<div style="left:299px;top:356.0px;width:445.5px;height:1px;background:#808080;"></div>
<div style="left:434px;top:279.6px;width:1px;height:90.0px;background:#808080;"></div>
<div style="left:468px;top:279.6px;width:1px;height:90.0px;background:#808080;"></div>
<div style="left:503px;top:279.6px;width:1px;height:90.0px;background:#808080;"></div>
<div style="left:537px;top:279.6px;width:1px;height:90.0px;background:#808080;"></div>
<div style="left:572px;top:279.6px;width:1px;height:90.0px;background:#808080;"></div>
<div style="left:606px;top:279.6px;width:1px;height:90.0px;background:#808080;"></div>
<div style="left:641px;top:279.6px;width:1px;height:90.0px;background:#808080;"></div>
<div style="left:675px;top:279.6px;width:1px;height:90.0px;background:#808080;"></div>
<div style="left:710px;top:279.6px;width:1px;height:90.0px;background:#808080;"></div>
<div style="left:366px;top:316.3px;width:1px;height:53.3px;background:#808080;"></div>
<div style="left:410px;top:316.3px;width:1px;height:53.3px;background:#808080;"></div>
<div style="left:744px;top:278.6px;width:1px;height:91.0px;background:#202020;"></div>
<div class="t" style="right:294.2px;top:281.18px;font-size:9.3px;color:#980C0C;font-weight:normal;text-align:right;">DLX</div>
<div class="t" style="right:259.2px;top:281.18px;font-size:9.3px;color:#980C0C;font-weight:normal;text-align:right;">DXK</div>
<div class="t" style="right:225.20000000000005px;top:281.18px;font-size:9.3px;color:#980C0C;font-weight:normal;text-align:right;">KING</div>
<div class="t" style="right:190.20000000000005px;top:281.18px;font-size:9.3px;color:#980C0C;font-weight:normal;text-align:right;">STK</div>
<div class="t" style="right:156.20000000000005px;top:281.18px;font-size:9.3px;color:#980C0C;font-weight:normal;text-align:right;">TEST</div>
<div class="t" style="right:121.20000000000005px;top:281.18px;font-size:9.3px;color:#980C0C;font-weight:normal;text-align:right;">VS</div>
<div class="t" style="right:87.20000000000005px;top:281.18px;font-size:9.3px;color:#980C0C;font-weight:normal;text-align:right;">QQ</div>
<div class="t" style="right:52.200000000000045px;top:281.18px;font-size:9.3px;color:#980C0C;font-weight:normal;text-align:right;">KJ</div>
<div class="t" style="right:18.200000000000045px;top:281.18px;font-size:9.3px;color:#980C0C;font-weight:normal;text-align:right;">KB</div>
<div class="t" style="left:300px;top:293.48px;font-size:9.3px;color:#980C0C;font-weight:normal;">Include Overbooking</div>
<div class="t" style="left:300px;top:305.58px;font-size:9.3px;color:#980C0C;font-weight:normal;">Physical Inventory</div>
<div class="t" style="right:294.2px;top:293.48px;font-size:9.3px;color:#000;font-weight:normal;text-align:right;">43</div>
<div class="t" style="right:259.2px;top:293.48px;font-size:9.3px;color:#000;font-weight:normal;text-align:right;">9</div>
<div class="t" style="right:225.20000000000005px;top:293.48px;font-size:9.3px;color:#000;font-weight:normal;text-align:right;">74</div>
<div class="t" style="right:190.20000000000005px;top:293.48px;font-size:9.3px;color:#000;font-weight:normal;text-align:right;">20</div>
<div class="t" style="right:156.20000000000005px;top:293.48px;font-size:9.3px;color:#000;font-weight:normal;text-align:right;">10</div>
<div class="t" style="right:121.20000000000005px;top:293.48px;font-size:9.3px;color:#000;font-weight:normal;text-align:right;">5</div>
<div class="t" style="right:87.20000000000005px;top:293.48px;font-size:9.3px;color:#000;font-weight:normal;text-align:right;">47</div>
<div class="t" style="right:52.200000000000045px;top:293.48px;font-size:9.3px;color:#000;font-weight:normal;text-align:right;">15</div>
<div class="t" style="right:18.200000000000045px;top:293.48px;font-size:9.3px;color:#000;font-weight:normal;text-align:right;">21</div>
<div class="t" style="right:294.2px;top:305.58px;font-size:9.3px;color:#000;font-weight:normal;text-align:right;">43</div>
<div class="t" style="right:259.2px;top:305.58px;font-size:9.3px;color:#000;font-weight:normal;text-align:right;">9</div>
<div class="t" style="right:225.20000000000005px;top:305.58px;font-size:9.3px;color:#000;font-weight:normal;text-align:right;">74</div>
<div class="t" style="right:190.20000000000005px;top:305.58px;font-size:9.3px;color:#000;font-weight:normal;text-align:right;">20</div>
<div class="t" style="right:156.20000000000005px;top:305.58px;font-size:9.3px;color:#000;font-weight:normal;text-align:right;">10</div>
<div class="t" style="right:121.20000000000005px;top:305.58px;font-size:9.3px;color:#000;font-weight:normal;text-align:right;">5</div>
<div class="t" style="right:87.20000000000005px;top:305.58px;font-size:9.3px;color:#000;font-weight:normal;text-align:right;">47</div>
<div class="t" style="right:52.200000000000045px;top:305.58px;font-size:9.3px;color:#000;font-weight:normal;text-align:right;">15</div>
<div class="t" style="right:18.200000000000045px;top:305.58px;font-size:9.3px;color:#000;font-weight:normal;text-align:right;">21</div>
<div class="t" style="left:300px;top:317.98px;font-size:9.3px;color:#089408;font-weight:normal;">AWD</div>
<div class="t" style="left:368px;top:317.98px;font-size:9.3px;color:#089408;font-weight:normal;">RATE_03</div>
<div class="t" style="right:294.2px;top:317.98px;font-size:9.3px;color:#089408;font-weight:normal;text-align:right;">300</div>
<div class="t" style="right:259.2px;top:317.98px;font-size:9.3px;color:#089408;font-weight:normal;text-align:right;">300</div>
<div class="t" style="right:225.20000000000005px;top:317.98px;font-size:9.3px;color:#089408;font-weight:normal;text-align:right;">300</div>
<div class="t" style="right:190.20000000000005px;top:317.98px;font-size:9.3px;color:#089408;font-weight:normal;text-align:right;">300</div>
<div class="t" style="right:156.20000000000005px;top:317.98px;font-size:9.3px;color:#089408;font-weight:normal;text-align:right;">300</div>
<div class="t" style="right:121.20000000000005px;top:317.98px;font-size:9.3px;color:#089408;font-weight:normal;text-align:right;">300</div>
<div class="t" style="right:87.20000000000005px;top:317.98px;font-size:9.3px;color:#089408;font-weight:normal;text-align:right;">300</div>
<div class="t" style="right:52.200000000000045px;top:317.98px;font-size:9.3px;color:#089408;font-weight:normal;text-align:right;">300</div>
<div class="t" style="right:18.200000000000045px;top:317.98px;font-size:9.3px;color:#089408;font-weight:normal;text-align:right;">300</div>
<div class="t" style="left:300px;top:331.38px;font-size:9.3px;color:#089408;font-weight:normal;">AWD2</div>
<div class="t" style="left:368px;top:331.38px;font-size:9.3px;color:#089408;font-weight:normal;">AW10</div>
<div class="t" style="right:294.2px;top:331.38px;font-size:9.3px;color:#089408;font-weight:normal;text-align:right;">200</div>
<div class="t" style="right:259.2px;top:331.38px;font-size:9.3px;color:#089408;font-weight:normal;text-align:right;">200</div>
<div class="t" style="right:225.20000000000005px;top:331.38px;font-size:9.3px;color:#089408;font-weight:normal;text-align:right;">200</div>
<div class="t" style="right:190.20000000000005px;top:331.38px;font-size:9.3px;color:#089408;font-weight:normal;text-align:right;">200</div>
<div class="t" style="right:156.20000000000005px;top:331.38px;font-size:9.3px;color:#089408;font-weight:normal;text-align:right;">200</div>
<div class="t" style="right:121.20000000000005px;top:331.38px;font-size:9.3px;color:#089408;font-weight:normal;text-align:right;">200</div>
<div class="t" style="right:87.20000000000005px;top:331.38px;font-size:9.3px;color:#089408;font-weight:normal;text-align:right;">200</div>
<div class="t" style="right:52.200000000000045px;top:331.38px;font-size:9.3px;color:#089408;font-weight:normal;text-align:right;">200</div>
<div class="t" style="right:18.200000000000045px;top:331.38px;font-size:9.3px;color:#089408;font-weight:normal;text-align:right;">200</div>
<div style="left:745px;top:278.6px;width:12.5px;height:91.0px;background:#D8D8D8;"></div>
<div style="left:745px;top:279.6px;width:12.5px;height:11.5px;background:#D8D8D8;box-sizing:border-box;border:1px solid;border-color:#fff #404040 #404040 #fff;box-shadow:inset -1px -1px #808080;"></div>
<svg style="left:747px;top:282.6px" width="8" height="5"><path d="M0 4.5h8l-4 -4z" fill="#000"/></svg>
<div style="left:745px;top:291.1px;width:12.5px;height:67.0px;background:#D8D8D8;box-sizing:border-box;border:1px solid;border-color:#fff #404040 #404040 #fff;box-shadow:inset -1px -1px #808080;"></div>
<div style="left:745px;top:358.1px;width:12.5px;height:11.5px;background:#D8D8D8;box-sizing:border-box;border:1px solid;border-color:#fff #404040 #404040 #fff;box-shadow:inset -1px -1px #808080;"></div>
<svg style="left:747px;top:361.1px" width="8" height="5"><path d="M0 0.5h8l-4 4z" fill="#000"/></svg>
<div style="left:179px;top:371.8px;width:116px;height:110.0px;box-sizing:border-box;border:1px solid #F0F000;"></div>
<div style="left:296px;top:371.8px;width:462px;height:110.0px;box-sizing:border-box;border:1px solid #2020F0;border-right:none;"></div>
<div style="left:757.5px;top:371.8px;width:1.5px;height:110.0px;background:#2020F0;"></div>
<div class="t" style="right:548.6px;top:383.48px;font-size:9.3px;color:#000;font-weight:normal;text-align:right;transform:scaleX(0.947);transform-origin:right;">Arrive</div>
<div style="left:216px;top:380.4px;width:63px;height:13px;background:#FFFFEC;box-sizing:border-box;border:1px solid #6a6a6a;border-top-color:#383838;border-left-color:#555;"></div>
<div class="t" style="left:217.8px;top:382.28px;font-size:9.3px;color:#000;font-weight:normal;">05-04-06</div>
<svg style="left:278.8px;top:380.29999999999995px" width="14.5" height="12.5"><rect x="0" y="0" width="14.5" height="12.5" fill="#fff"/><rect x="1" y="1" width="13.5" height="11.5" fill="#303030"/><rect x="1" y="1" width="12.5" height="10.5" fill="#000"/><rect x="1" y="1.5" width="12.5" height="1.5" fill="#10E010"/><rect x="2.2" y="4.6" width="1.2" height="1.2" fill="#fff"/><rect x="2.2" y="6.9" width="1.2" height="1.2" fill="#fff"/><rect x="2.2" y="9.2" width="1.2" height="1.2" fill="#fff"/><rect x="4.8" y="4.6" width="1.2" height="1.2" fill="#fff"/><rect x="4.8" y="6.9" width="1.2" height="1.2" fill="#fff"/><rect x="4.8" y="9.2" width="1.2" height="1.2" fill="#fff"/><rect x="7.4" y="4.6" width="1.2" height="1.2" fill="#fff"/><rect x="7.4" y="6.9" width="1.2" height="1.2" fill="#fff"/><rect x="7.4" y="9.2" width="1.2" height="1.2" fill="#fff"/><rect x="10.0" y="4.6" width="1.2" height="1.2" fill="#fff"/><rect x="10.0" y="6.9" width="1.2" height="1.2" fill="#fff"/><rect x="10.0" y="9.2" width="1.2" height="1.2" fill="#fff"/></svg>
<div class="t" style="right:549px;top:404.48px;font-size:9.3px;color:#000;font-weight:normal;text-align:right;">Nights</div>
<div style="left:216px;top:401.4px;width:20.6px;height:13px;background:#FFFFEC;box-sizing:border-box;border:1px solid #6a6a6a;border-top-color:#383838;border-left-color:#555;"></div>
<div class="t" style="left:217.8px;top:403.28px;font-size:9.3px;color:#000;font-weight:normal;">1</div>
<div class="t" style="right:548.5px;top:425.28px;font-size:9.3px;color:#000;font-weight:normal;text-align:right;">Depart</div>
<div style="left:216px;top:422.4px;width:63px;height:13px;background:#FFFFEC;box-sizing:border-box;border:1px solid #6a6a6a;border-top-color:#383838;border-left-color:#555;"></div>
<div class="t" style="left:217.8px;top:424.28px;font-size:9.3px;color:#000;font-weight:normal;">05-05-06</div>
<svg style="left:278.8px;top:422.29999999999995px" width="14.5" height="12.5"><rect x="0" y="0" width="14.5" height="12.5" fill="#fff"/><rect x="1" y="1" width="13.5" height="11.5" fill="#303030"/><rect x="1" y="1" width="12.5" height="10.5" fill="#000"/><rect x="1" y="1.5" width="12.5" height="1.5" fill="#10E010"/><rect x="2.2" y="4.6" width="1.2" height="1.2" fill="#fff"/><rect x="2.2" y="6.9" width="1.2" height="1.2" fill="#fff"/><rect x="2.2" y="9.2" width="1.2" height="1.2" fill="#fff"/><rect x="4.8" y="4.6" width="1.2" height="1.2" fill="#fff"/><rect x="4.8" y="6.9" width="1.2" height="1.2" fill="#fff"/><rect x="4.8" y="9.2" width="1.2" height="1.2" fill="#fff"/><rect x="7.4" y="4.6" width="1.2" height="1.2" fill="#fff"/><rect x="7.4" y="6.9" width="1.2" height="1.2" fill="#fff"/><rect x="7.4" y="9.2" width="1.2" height="1.2" fill="#fff"/><rect x="10.0" y="4.6" width="1.2" height="1.2" fill="#fff"/><rect x="10.0" y="6.9" width="1.2" height="1.2" fill="#fff"/><rect x="10.0" y="9.2" width="1.2" height="1.2" fill="#fff"/></svg>
<div class="t" style="right:549px;top:445.48px;font-size:9.3px;color:#000;font-weight:normal;text-align:right;">Rooms</div>
<div style="left:216px;top:442.4px;width:20.6px;height:13px;background:#FFFFEC;box-sizing:border-box;border:1px solid #6a6a6a;border-top-color:#383838;border-left-color:#555;"></div>
<div class="t" style="left:217.8px;top:444.28px;font-size:9.3px;color:#000;font-weight:normal;">1</div>
<div class="t" style="right:491.5px;top:445.48px;font-size:9.3px;color:#000;font-weight:normal;text-align:right;">Adults</div>
<div style="left:273.5px;top:442.4px;width:20px;height:13px;background:#FFFFEC;box-sizing:border-box;border:1px solid #6a6a6a;border-top-color:#383838;border-left-color:#555;"></div>
<div class="t" style="left:275.3px;top:444.28px;font-size:9.3px;color:#000;font-weight:normal;">1</div>
<div style="left:181.5px;top:460.8px;width:55.5px;height:18.2px;background:#D8D8D8;box-sizing:border-box;border:1px solid;border-color:#fff #404040 #404040 #fff;box-shadow:inset -1px -1px #808080;"></div>
<div class="t" style="left:181.5px;width:55.5px;top:465.58px;font-size:9.3px;color:#000;font-weight:normal;text-align:center;">Chg All</div>
<div style="left:237px;top:460.8px;width:56.5px;height:18.2px;background:#D8D8D8;box-sizing:border-box;border:1px solid;border-color:#fff #404040 #404040 #fff;box-shadow:inset -1px -1px #808080;"></div>
<div class="t" style="left:237px;width:56.5px;top:465.58px;font-size:9.3px;color:#000;font-weight:normal;text-align:center;">Check&gt;&gt;</div>
<div class="t" style="left:326px;top:376.58px;font-size:9.3px;color:#000;font-weight:normal;transform:scaleX(0.975);transform-origin:left;">Rate Code Filter</div>
<div style="left:434px;top:374.2px;width:15.5px;height:12px;background:#D8D8D8;box-sizing:border-box;border:1px solid;border-color:#fff #404040 #404040 #fff;box-shadow:inset -1px -1px #808080;"></div>
<div class="t" style="left:434px;width:15.5px;top:375.88px;font-size:9.3px;color:#A0A0A0;font-weight:normal;text-align:center;text-shadow:1px 1px #fff;transform:scaleX(0.764);transform-origin:center;">&lt;&lt;</div>
<div style="left:450.5px;top:374.2px;width:15.5px;height:12px;background:#D8D8D8;box-sizing:border-box;border:1px solid;border-color:#fff #404040 #404040 #fff;box-shadow:inset -1px -1px #808080;"></div>
<div class="t" style="left:450.5px;width:15.5px;top:375.88px;font-size:9.3px;color:#A0A0A0;font-weight:normal;text-align:center;text-shadow:1px 1px #fff;transform:scaleX(0.792);transform-origin:center;">&lt;</div>
<div style="left:467px;top:374.2px;width:54px;height:12px;background:#FFFFEC;box-sizing:border-box;border:1px solid #6a6a6a;border-top-color:#383838;border-left-color:#555;"></div>
<div class="t" style="left:467.8px;top:375.98px;font-size:9.3px;color:#000;font-weight:bold;transform:scaleX(0.884);transform-origin:left;">FARBOS</div>
<div style="left:521px;top:374.2px;width:14.5px;height:12px;background:#D8D8D8;box-sizing:border-box;border:1px solid;border-color:#fff #404040 #404040 #fff;box-shadow:inset -1px -1px #808080;"></div>
<svg style="left:521px;top:374.2px" width="14.5" height="12"><path d="M4.2 5.0h6l-3 3z M6.2 2.0h2v3h-2z M4.2 9.0h6v1h-6z" fill="#000"/></svg>
<div style="left:535.5px;top:374.2px;width:187px;height:12px;background:#D8D8D8;box-sizing:border-box;border:1px solid #6a6a6a;border-top-color:#383838;border-left-color:#555;"></div>
<div class="t" style="left:537px;top:375.98px;font-size:9.3px;color:#000;font-weight:normal;transform:scaleX(0.971);transform-origin:left;">The Fairmont Copley Plaza, Boston</div>
<div style="left:723px;top:374.2px;width:15.5px;height:12px;background:#D8D8D8;box-sizing:border-box;border:1px solid;border-color:#fff #404040 #404040 #fff;box-shadow:inset -1px -1px #808080;"></div>
<div class="t" style="left:723px;width:15.5px;top:375.88px;font-size:9.3px;color:#A0A0A0;font-weight:normal;text-align:center;text-shadow:1px 1px #fff;transform:scaleX(0.792);transform-origin:center;">&gt;</div>
<div style="left:740px;top:374.2px;width:16px;height:12px;background:#D8D8D8;box-sizing:border-box;border:1px solid;border-color:#fff #404040 #404040 #fff;box-shadow:inset -1px -1px #808080;"></div>
<div class="t" style="left:740px;width:16px;top:375.88px;font-size:9.3px;color:#A0A0A0;font-weight:normal;text-align:center;text-shadow:1px 1px #fff;transform:scaleX(0.764);transform-origin:center;">&gt;&gt;</div>
<div style="left:298px;top:388.4px;width:446.5px;height:91.0px;background:#fff;box-sizing:border-box;border-top:1px solid #202020;border-left:1.5px solid #101010;"></div>
<div style="left:299.5px;top:389.4px;width:120.5px;height:12.6px;background:#FFFFEC;"></div>
<div style="left:420px;top:388.9px;width:14.3px;height:13.1px;background:#D8D8D8;box-sizing:border-box;border:1px solid;border-color:#fff #404040 #404040 #fff;box-shadow:inset -1px -1px #808080;"></div>
<svg style="left:420px;top:388.9px" width="14.3" height="13.1"><path d="M4.2 5.5h6l-3 3z M6.2 2.5h2v3h-2z M4.2 9.6h6v1h-6z" fill="#000"/></svg>
<div style="left:434.3px;top:389.4px;width:310.2px;height:12.6px;background:#D8D8D8;"></div>
<div class="t" style="left:300px;top:390.98px;font-size:9.3px;color:#000;font-weight:normal;">AWARDS</div>
<div style="left:299.5px;top:402.0px;width:445px;height:24.1px;background:#D8D8D8;"></div>
<div style="left:410px;top:426.09999999999997px;width:24px;height:53.3px;background:#D8D8D8;"></div>
<div style="left:299px;top:402.0px;width:445.5px;height:1px;background:#808080;"></div>
<div style="left:299px;top:414.0px;width:445.5px;height:1px;background:#808080;"></div>
<div style="left:299px;top:426.09999999999997px;width:445.5px;height:1px;background:#808080;"></div>
<div style="left:299px;top:439.09999999999997px;width:445.5px;height:1px;background:#808080;"></div>
<div style="left:299px;top:452.5px;width:445.5px;height:1px;background:#808080;"></div>
<div style="left:299px;top:465.79999999999995px;width:445.5px;height:1px;background:#808080;"></div>
<div style="left:434px;top:389.4px;width:1px;height:90.0px;background:#808080;"></div>
<div style="left:468px;top:389.4px;width:1px;height:90.0px;background:#808080;"></div>
<div style="left:503px;top:389.4px;width:1px;height:90.0px;background:#808080;"></div>
<div style="left:537px;top:389.4px;width:1px;height:90.0px;background:#808080;"></div>
<div style="left:572px;top:389.4px;width:1px;height:90.0px;background:#808080;"></div>
<div style="left:606px;top:389.4px;width:1px;height:90.0px;background:#808080;"></div>
<div style="left:641px;top:389.4px;width:1px;height:90.0px;background:#808080;"></div>
<div style="left:675px;top:389.4px;width:1px;height:90.0px;background:#808080;"></div>
<div style="left:710px;top:389.4px;width:1px;height:90.0px;background:#808080;"></div>
<div style="left:366px;top:426.09999999999997px;width:1px;height:53.3px;background:#808080;"></div>
<div style="left:410px;top:426.09999999999997px;width:1px;height:53.3px;background:#808080;"></div>
<div style="left:744px;top:388.4px;width:1px;height:91.0px;background:#202020;"></div>
<div class="t" style="right:294.2px;top:390.98px;font-size:9.3px;color:#980C0C;font-weight:normal;text-align:right;">35</div>
<div class="t" style="right:259.2px;top:390.98px;font-size:9.3px;color:#980C0C;font-weight:normal;text-align:right;">A1B</div>
<div class="t" style="right:225.20000000000005px;top:390.98px;font-size:9.3px;color:#980C0C;font-weight:normal;text-align:right;">A2B</div>
<div class="t" style="right:190.20000000000005px;top:390.98px;font-size:9.3px;color:#980C0C;font-weight:normal;text-align:right;">A3B</div>
<div class="t" style="right:156.20000000000005px;top:390.98px;font-size:9.3px;color:#980C0C;font-weight:normal;text-align:right;">SUK</div>
<div class="t" style="right:121.20000000000005px;top:390.98px;font-size:9.3px;color:#980C0C;font-weight:normal;text-align:right;">SUT</div>
<div class="t" style="left:300px;top:403.28px;font-size:9.3px;color:#980C0C;font-weight:normal;">Include Overbooking</div>
<div class="t" style="left:300px;top:415.38px;font-size:9.3px;color:#980C0C;font-weight:normal;">Physical Inventory</div>
<div class="t" style="right:259.2px;top:403.28px;font-size:9.3px;color:#000;font-weight:normal;text-align:right;">25</div>
<div class="t" style="right:225.20000000000005px;top:403.28px;font-size:9.3px;color:#000;font-weight:normal;text-align:right;">25</div>
<div class="t" style="right:190.20000000000005px;top:403.28px;font-size:9.3px;color:#000;font-weight:normal;text-align:right;">25</div>
<div class="t" style="right:156.20000000000005px;top:403.28px;font-size:9.3px;color:#000;font-weight:normal;text-align:right;">25</div>
<div class="t" style="right:121.20000000000005px;top:403.28px;font-size:9.3px;color:#000;font-weight:normal;text-align:right;">26</div>
<div class="t" style="right:294.2px;top:415.38px;font-size:9.3px;color:#000;font-weight:normal;text-align:right;">0</div>
<div class="t" style="right:259.2px;top:415.38px;font-size:9.3px;color:#000;font-weight:normal;text-align:right;">25</div>
<div class="t" style="right:225.20000000000005px;top:415.38px;font-size:9.3px;color:#000;font-weight:normal;text-align:right;">25</div>
<div class="t" style="right:190.20000000000005px;top:415.38px;font-size:9.3px;color:#000;font-weight:normal;text-align:right;">25</div>
<div class="t" style="right:156.20000000000005px;top:415.38px;font-size:9.3px;color:#000;font-weight:normal;text-align:right;">25</div>
<div class="t" style="right:121.20000000000005px;top:415.38px;font-size:9.3px;color:#000;font-weight:normal;text-align:right;">26</div>
<div style="left:745px;top:388.4px;width:12.5px;height:91.0px;background:#D8D8D8;"></div>
<div style="left:745px;top:389.4px;width:12.5px;height:11.5px;background:#D8D8D8;box-sizing:border-box;border:1px solid;border-color:#fff #404040 #404040 #fff;box-shadow:inset -1px -1px #808080;"></div>
<svg style="left:747px;top:392.4px" width="8" height="5"><path d="M0 4.5h8l-4 -4z" fill="#000"/></svg>
<div style="left:745px;top:400.9px;width:12.5px;height:67.0px;background:#D8D8D8;box-sizing:border-box;border:1px solid;border-color:#fff #404040 #404040 #fff;box-shadow:inset -1px -1px #808080;"></div>
<div style="left:745px;top:467.9px;width:12.5px;height:11.5px;background:#D8D8D8;box-sizing:border-box;border:1px solid;border-color:#fff #404040 #404040 #fff;box-shadow:inset -1px -1px #808080;"></div>
<svg style="left:747px;top:470.9px" width="8" height="5"><path d="M0 0.5h8l-4 4z" fill="#000"/></svg>
<div style="left:180px;top:482.7px;width:115px;height:32.6px;box-sizing:border-box;border:1px solid #F0F000;"></div>
<svg style="left:182px;top:487.5px" width="10" height="10"><circle cx="5" cy="5" r="4.5" fill="#F0F0F0"/><path d="M1.8 8.2A4.5 4.5 0 0 1 8.2 1.8" stroke="#707070" stroke-width="1.2" fill="none"/><path d="M8.2 1.8A4.5 4.5 0 0 1 1.8 8.2" stroke="#fff" stroke-width="1" fill="none"/><circle cx="5" cy="5" r="1.5" fill="#000"/></svg>
<div class="t" style="left:193.8px;top:488.08px;font-size:9.3px;color:#000;font-weight:normal;">Night</div>
<svg style="left:228.6px;top:487.5px" width="10" height="10"><circle cx="5" cy="5" r="4.5" fill="#F0F0F0"/><path d="M1.8 8.2A4.5 4.5 0 0 1 8.2 1.8" stroke="#707070" stroke-width="1.2" fill="none"/><path d="M8.2 1.8A4.5 4.5 0 0 1 1.8 8.2" stroke="#fff" stroke-width="1" fill="none"/></svg>
<div class="t" style="left:240px;top:488.08px;font-size:9.3px;color:#000;font-weight:normal;"><u>T</u>otal</div>
<svg style="left:267px;top:487px" width="10" height="10"><rect x="0" y="0" width="10" height="10" fill="#fff"/><rect x="0" y="0" width="9" height="9" fill="#808080"/><rect x="1" y="1" width="8" height="8" fill="#F2F2F2"/><path d="M1 1h7.5v1h-6.5v6.5h-1z" fill="#404040"/></svg>
<div class="t" style="left:279.5px;top:488.08px;font-size:9.3px;color:#000;font-weight:normal;"><u>A</u>ll</div>
<svg style="left:182px;top:501px" width="10" height="10"><rect x="0" y="0" width="10" height="10" fill="#fff"/><rect x="0" y="0" width="9" height="9" fill="#808080"/><rect x="1" y="1" width="8" height="8" fill="#F2F2F2"/><path d="M1 1h7.5v1h-6.5v6.5h-1z" fill="#404040"/></svg>
<div class="t" style="left:194.5px;top:501.58px;font-size:9.3px;color:#000;font-weight:normal;"><u>C</u>losed</div>
<svg style="left:233.7px;top:501px" width="10" height="10"><rect x="0" y="0" width="10" height="10" fill="#fff"/><rect x="0" y="0" width="9" height="9" fill="#808080"/><rect x="1" y="1" width="8" height="8" fill="#F2F2F2"/><path d="M1 1h7.5v1h-6.5v6.5h-1z" fill="#404040"/><path d="M2.5 4.5l2 2.2l3.3 -4.5" stroke="#000" stroke-width="1.3" fill="none"/></svg>
<div class="t" style="left:246px;top:501.58px;font-size:9.3px;color:#000;font-weight:normal;">Alter<u>n</u>ates</div>
<div style="left:296.3px;top:483px;width:134.2px;height:32.2px;box-sizing:border-box;border:1px solid #F0F000;"></div>
<div class="t" style="left:312px;top:484.58px;font-size:9.3px;color:#980C0C;font-weight:normal;">Total Property Count 193</div>
<div style="left:298.4px;top:496.3px;width:21.200000000000045px;height:16.8px;background:#D8D8D8;box-sizing:border-box;border:1px solid;border-color:#fff #404040 #404040 #fff;box-shadow:inset -1px -1px #808080;"></div>
<div class="t" style="left:298.4px;width:21.200000000000045px;top:500.38px;font-size:9.3px;color:#000;font-weight:normal;text-align:center;transform:scaleX(0.847);transform-origin:center;">&lt;&lt;&lt;</div>
<div style="left:320px;top:496.3px;width:21.5px;height:16.8px;background:#D8D8D8;box-sizing:border-box;border:1px solid;border-color:#fff #404040 #404040 #fff;box-shadow:inset -1px -1px #808080;"></div>
<div class="t" style="left:320px;width:21.5px;top:500.38px;font-size:9.3px;color:#000;font-weight:normal;text-align:center;transform:scaleX(0.847);transform-origin:center;">&lt;&lt;</div>
<div style="left:341.6px;top:496.3px;width:20.899999999999977px;height:16.8px;background:#D8D8D8;box-sizing:border-box;border:1px solid;border-color:#fff #404040 #404040 #fff;box-shadow:inset -1px -1px #808080;"></div>
<div class="t" style="left:341.6px;width:20.899999999999977px;top:500.38px;font-size:9.3px;color:#000;font-weight:normal;text-align:center;transform:scaleX(0.847);transform-origin:center;">&lt;</div>
<div style="left:363px;top:496.3px;width:21px;height:16.8px;background:#D8D8D8;box-sizing:border-box;border:1px solid;border-color:#fff #404040 #404040 #fff;box-shadow:inset -1px -1px #808080;"></div>
<div class="t" style="left:363px;width:21px;top:500.38px;font-size:9.3px;color:#000;font-weight:normal;text-align:center;transform:scaleX(0.847);transform-origin:center;">&gt;</div>
<div style="left:385px;top:496.3px;width:21px;height:16.8px;background:#D8D8D8;box-sizing:border-box;border:1px solid;border-color:#fff #404040 #404040 #fff;box-shadow:inset -1px -1px #808080;"></div>
<div class="t" style="left:385px;width:21px;top:500.38px;font-size:9.3px;color:#000;font-weight:normal;text-align:center;transform:scaleX(0.847);transform-origin:center;">&gt;&gt;</div>
<div style="left:407px;top:496.3px;width:21.5px;height:16.8px;background:#D8D8D8;box-sizing:border-box;border:1px solid;border-color:#fff #404040 #404040 #fff;box-shadow:inset -1px -1px #808080;"></div>
<div class="t" style="left:407px;width:21.5px;top:500.38px;font-size:9.3px;color:#000;font-weight:normal;text-align:center;transform:scaleX(0.847);transform-origin:center;">&gt;&gt;&gt;</div>
<div style="left:549.2px;top:484.3px;width:8.899999999999977px;height:8.5px;background:#0A780A;"></div>
<div class="t" style="left:560.8px;top:484.18px;font-size:9.3px;color:#000;font-weight:normal;transform:scaleX(0.979);transform-origin:left;">Pref</div>
<div style="left:580.1px;top:484.3px;width:8.799999999999955px;height:8.5px;background:#D42222;"></div>
<div class="t" style="left:591.2px;top:484.18px;font-size:9.3px;color:#000;font-weight:normal;transform:scaleX(0.919);transform-origin:left;">Acc Ex</div>
<div style="left:619.8px;top:484.3px;width:9.100000000000023px;height:8.5px;background:#FF10FF;"></div>
<div class="t" style="left:631.3px;top:484.18px;font-size:9.3px;color:#000;font-weight:normal;transform:scaleX(0.905);transform-origin:left;">Max Occ</div>
<div style="left:665.9px;top:484.3px;width:9.600000000000023px;height:8.5px;background:#14C414;"></div>
<div class="t" style="left:677.4px;top:484.18px;font-size:9.3px;color:#000;font-weight:normal;transform:scaleX(0.955);transform-origin:left;">Neg</div>
<div style="left:696.6px;top:484.3px;width:8.600000000000023px;height:8.5px;background:#208888;"></div>
<div class="t" style="left:707.5px;top:484.18px;font-size:9.3px;color:#000;font-weight:normal;transform:scaleX(0.998);transform-origin:left;">Block</div>
<div style="left:732.5px;top:484.3px;width:8.799999999999955px;height:8.5px;background:#FFFF10;"></div>
<div class="t" style="left:743.2px;top:484.18px;font-size:9.3px;color:#000;font-weight:normal;transform:scaleX(0.933);transform-origin:left;">MR</div>
<div style="left:541.3px;top:495.3px;width:53.200000000000045px;height:18px;background:#D8D8D8;box-sizing:border-box;border:1px solid;border-color:#fff #404040 #404040 #fff;box-shadow:inset -1px -1px #808080;"></div>
<div class="t" style="left:541.3px;width:53.200000000000045px;top:499.98px;font-size:9.3px;color:#000;font-weight:normal;text-align:center;">Item Inv.</div>
<div style="left:595.5px;top:495.3px;width:53.0px;height:18px;background:#D8D8D8;box-sizing:border-box;border:1px solid;border-color:#fff #404040 #404040 #fff;box-shadow:inset -1px -1px #808080;"></div>
<div class="t" style="left:595.5px;width:53.0px;top:499.98px;font-size:9.3px;color:#000;font-weight:normal;text-align:center;">Res Types</div>
<div style="left:649.6px;top:495.3px;width:52.69999999999993px;height:18px;background:#D8D8D8;box-sizing:border-box;border:1px solid;border-color:#fff #404040 #404040 #fff;box-shadow:inset -1px -1px #808080;"></div>
<div class="t" style="left:649.6px;width:52.69999999999993px;top:499.98px;font-size:9.3px;color:#000;font-weight:normal;text-align:center;">Rate Info</div>
<div style="left:703.9px;top:495.3px;width:53.10000000000002px;height:18px;background:#D8D8D8;box-sizing:border-box;border:1px solid;border-color:#fff #404040 #404040 #fff;box-shadow:inset -1px -1px #808080;"></div>
<div class="t" style="left:703.9px;width:53.10000000000002px;top:499.98px;font-size:9.3px;color:#000;font-weight:normal;text-align:center;">Resv</div>
<div style="left:176px;top:518.8px;width:584px;height:1.5px;background:#202020;"></div>
<div style="left:6px;top:520.3px;width:754px;height:32px;background:#D8D8D8;"></div>
<div style="left:6px;top:522.8px;width:754px;height:1px;background:#8a8a8a;"></div>
<div style="left:6px;top:523.8px;width:754px;height:1px;background:#fff;"></div>
<div style="left:177px;top:523px;width:1px;height:29px;background:#8a8a8a;"></div>
<div style="left:178px;top:524px;width:1px;height:28px;background:#fff;"></div>
<div style="left:9.4px;top:530px;width:54.699999999999996px;height:18px;background:#D8D8D8;box-sizing:border-box;border:1px solid;border-color:#fff #404040 #404040 #fff;box-shadow:inset -1px -1px #808080;"></div>
<div class="t" style="left:9.4px;width:54.699999999999996px;top:534.68px;font-size:9.3px;color:#A0A0A0;font-weight:normal;text-align:center;text-shadow:1px 1px #fff;">Rate Desc</div>
<div style="left:65px;top:530px;width:54.7px;height:18px;background:#D8D8D8;box-sizing:border-box;border:1px solid;border-color:#fff #404040 #404040 #fff;box-shadow:inset -1px -1px #808080;"></div>
<div class="t" style="left:65px;width:54.7px;top:534.68px;font-size:9.3px;color:#000;font-weight:normal;text-align:center;">Alternates</div>
<div style="left:120.5px;top:530px;width:55.80000000000001px;height:18px;background:#D8D8D8;box-sizing:border-box;border:1px solid;border-color:#fff #404040 #404040 #fff;box-shadow:inset -1px -1px #808080;"></div>
<div class="t" style="left:120.5px;width:55.80000000000001px;top:534.68px;font-size:9.3px;color:#000;font-weight:normal;text-align:center;">A<u>n</u>alyze</div>
<div style="left:516.5px;top:530px;width:59.299999999999955px;height:18px;background:#D8D8D8;box-sizing:border-box;border:1px solid;border-color:#fff #404040 #404040 #fff;box-shadow:inset -1px -1px #808080;"></div>
<div class="t" style="left:516.5px;width:59.299999999999955px;top:534.68px;font-size:9.3px;color:#000;font-weight:normal;text-align:center;"><u>D</u>efine Srch</div>
<div style="left:576.3px;top:530px;width:59.10000000000002px;height:18px;background:#D8D8D8;box-sizing:border-box;border:1px solid;border-color:#fff #404040 #404040 #fff;box-shadow:inset -1px -1px #808080;"></div>
<div class="t" style="left:576.3px;width:59.10000000000002px;top:534.68px;font-size:9.3px;color:#000;font-weight:normal;text-align:center;"><u>P</u>roperties</div>
<div style="left:636.5px;top:530px;width:58.89999999999998px;height:18px;background:#D8D8D8;box-sizing:border-box;border:1px solid;border-color:#fff #404040 #404040 #fff;box-shadow:inset -1px -1px #808080;"></div>
<div class="t" style="left:636.5px;width:58.89999999999998px;top:534.68px;font-size:9.3px;color:#A0A0A0;font-weight:normal;text-align:center;text-shadow:1px 1px #fff;"><u>A</u>vailability</div>
<div style="left:696.3px;top:530px;width:59.30000000000007px;height:18px;background:#D8D8D8;box-sizing:border-box;border:1px solid;border-color:#fff #404040 #404040 #fff;box-shadow:inset -1px -1px #808080;"></div>
<div class="t" style="left:696.3px;width:59.30000000000007px;top:534.68px;font-size:9.3px;color:#000;font-weight:normal;text-align:center;"><u>E</u>nd Call</div>
</body></html>
